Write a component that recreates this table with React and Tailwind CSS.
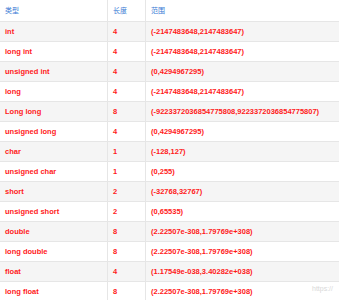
import React from 'react'

const rows = [
  ['int', '4', '(-2147483648,2147483647)'],
  ['long int', '4', '(-2147483648,2147483647)'],
  ['unsigned int', '4', '(0,4294967295)'],
  ['long', '4', '(-2147483648,2147483647)'],
  ['Long long', '8', '(-9223372036854775808,9223372036854775807)'],
  ['unsigned long', '4', '(0,4294967295)'],
  ['char', '1', '(-128,127)'],
  ['unsigned char', '1', '(0,255)'],
  ['short', '2', '(-32768,32767)'],
  ['unsigned short', '2', '(0,65535)'],
  ['double', '8', '(2.22507e-308,1.79769e+308)'],
  ['long double', '8', '(2.22507e-308,1.79769e+308)'],
  ['float', '4', '(1.17549e-038,3.40282e+038)'],
  ['long float', '8', '(2.22507e-308,1.79769e+308)'],
]

export default function App() {
  return (
    <div className="relative w-[339px] h-[300px] overflow-hidden bg-white font-['Liberation_Sans','Noto_Sans_CJK_SC',sans-serif]">
      {/* header */}
      <div className="flex h-[22px] border-b border-[#e6e6e6] text-[7px] text-[#3a7bd5] font-['Noto_Sans_CJK_SC',sans-serif]">
        <div className="w-[108px] border-r border-[#e6e6e6] pl-[5px] flex items-center">类型</div>
        <div className="w-[38px] border-r border-[#e6e6e6] pl-[5px] flex items-center">长度</div>
        <div className="flex-1 pl-[5px] flex items-center">范围</div>
      </div>

      {/* body */}
      {rows.map(([type, size, range], i) => (
        <div
          key={type}
          className={`flex h-[20px] border-b border-[#e6e6e6] text-[7.5px] font-bold text-[#ff1a1a] ${
            i % 2 === 0 ? 'bg-[#f5f5f5]' : 'bg-white'
          }`}
        >
          <div className="w-[108px] border-r border-[#e6e6e6] pl-[5px] flex items-center">{type}</div>
          <div className="w-[38px] border-r border-[#e6e6e6] pl-[5px] flex items-center">{size}</div>
          <div className="flex-1 pl-[5px] flex items-center whitespace-nowrap">{range}</div>
        </div>
      ))}

      {/* watermark */}
      <div className="absolute right-[6px] bottom-[6px] text-[7px] text-[#d8d8d8]">https://</div>
    </div>
  )
}
